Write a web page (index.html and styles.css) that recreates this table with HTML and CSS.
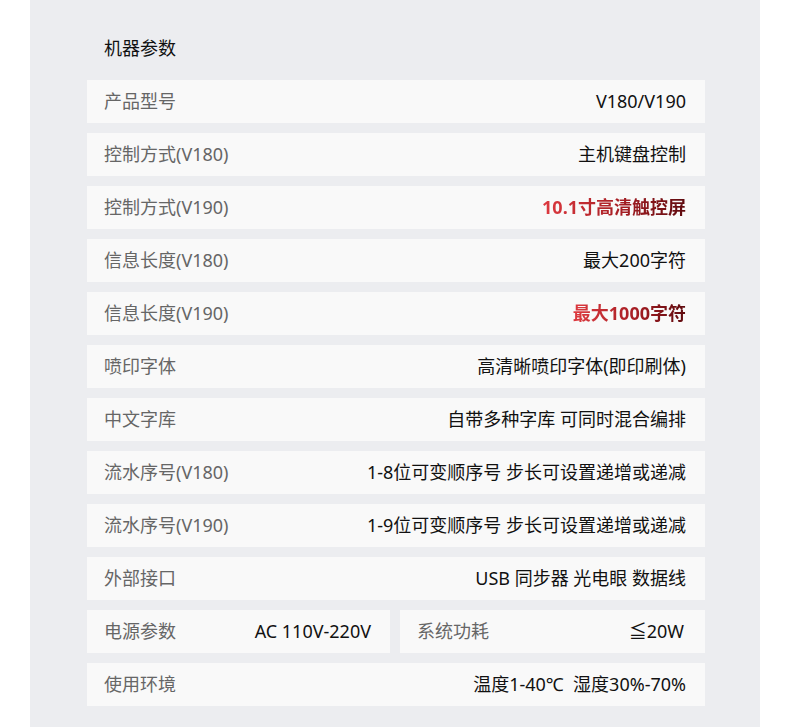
FILE: index.html
```html
<!DOCTYPE html>
<html lang="zh">
<head>
<meta charset="utf-8">
<link rel="stylesheet" href="styles.css">
</head>
<body>
<div class="panel">
  <h2 class="title">机器参数</h2>
  <div class="rows">
    <div class="row"><span class="label">产品型号</span><span class="value">V180/V190</span></div>
    <div class="row"><span class="label">控制方式(V180)</span><span class="value">主机键盘控制</span></div>
    <div class="row"><span class="label">控制方式(V190)</span><span class="value hl">10.1寸高清触控屏</span></div>
    <div class="row"><span class="label">信息长度(V180)</span><span class="value">最大200字符</span></div>
    <div class="row"><span class="label">信息长度(V190)</span><span class="value hl">最大1000字符</span></div>
    <div class="row"><span class="label">喷印字体</span><span class="value">高清晰喷印字体(即印刷体)</span></div>
    <div class="row"><span class="label">中文字库</span><span class="value">自带多种字库 可同时混合编排</span></div>
    <div class="row"><span class="label">流水序号(V180)</span><span class="value">1-8位可变顺序号 步长可设置递增或递减</span></div>
    <div class="row"><span class="label">流水序号(V190)</span><span class="value">1-9位可变顺序号 步长可设置递增或递减</span></div>
    <div class="row"><span class="label">外部接口</span><span class="value">USB 同步器 光电眼 数据线</span></div>
    <div class="split">
      <div class="row"><span class="label">电源参数</span><span class="value">AC 110V-220V</span></div>
      <div class="row"><span class="label">系统功耗</span><span class="value">≦20W</span></div>
    </div>
    <div class="row"><span class="label">使用环境</span><span class="value">温度1-40℃&nbsp; 湿度30%-70%</span></div>
  </div>
</div>
</body>
</html>
```
FILE: styles.css
```css
html, body {
  margin: 0;
  padding: 0;
  background: #ffffff;
}
body {
  font-family: "Noto Sans", "Noto Sans CJK SC", sans-serif;
  font-size: 18px;
}
.panel {
  margin-left: 30px;
  width: 730px;
  min-height: 727px;
  background: #ecedf0;
  box-sizing: border-box;
  padding: 36px 55px 23px 57px;
}
.title {
  margin: 0 0 19px 17px;
  font-size: 18px;
  font-weight: 400;
  color: #111;
  line-height: 25px;
}
.rows {
  display: flex;
  flex-direction: column;
  gap: 10px;
  width: 618px;
}
.row {
  height: 43px;
  background: #f9f9f9;
  display: flex;
  align-items: center;
  justify-content: space-between;
  padding: 0 19px 2px 17px;
  box-sizing: border-box;
  line-height: 24px;
}
.label {
  color: #666;
}
.value {
  color: #111;
}
.split {
  display: grid;
  grid-template-columns: 303px 1fr;
  gap: 10px;
}
.split .row:last-child {
  padding-right: 21px;
}
.hl {
  font-weight: 700;
  background: linear-gradient(90deg, #de3a40 0%, #a61e24 55%, #5e0a0e 100%);
  -webkit-background-clip: text;
  background-clip: text;
  color: transparent;
}
```
